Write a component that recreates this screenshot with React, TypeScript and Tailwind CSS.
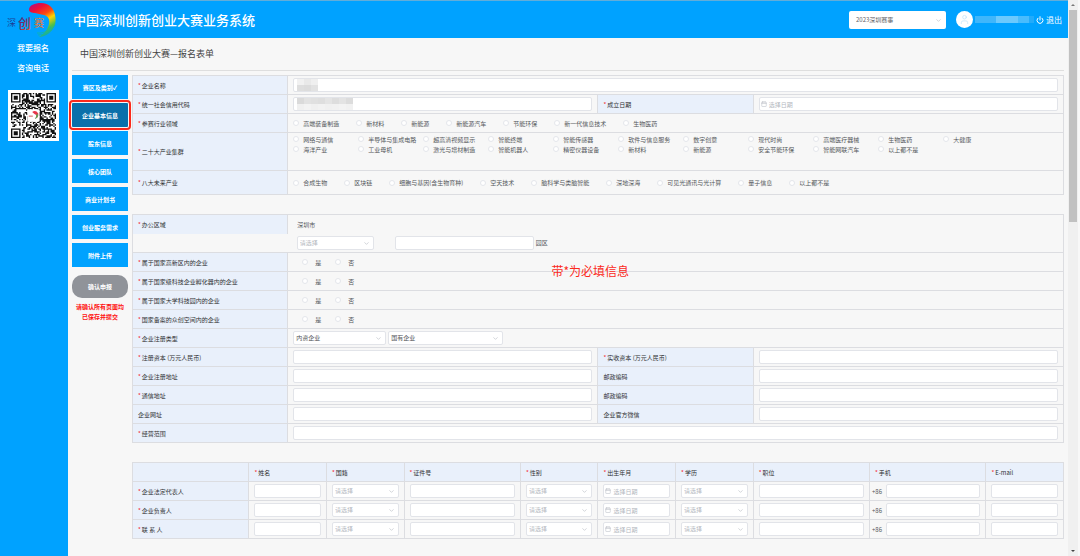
import type { ReactNode } from 'react';
import clsx from 'clsx';
import { Calendar, ChevronDown, Power, User } from 'lucide-react';

const sections = [
  '赛区及类别✓',
  '企业基本信息',
  '股东信息',
  '核心团队',
  '商业计划书',
  '创业服务需求',
  '附件上传',
];

const fields = [
  '高端装备制造',
  '新材料',
  '新能源',
  '新能源汽车',
  '节能环保',
  '新一代信息技术',
  '生物医药',
];

const clusters = [
  '网络与通信',
  '半导体与集成电路',
  '超高清视频显示',
  '智能终端',
  '智能传感器',
  '软件与信息服务',
  '数字创意',
  '现代时尚',
  '高端医疗器械',
  '生物医药',
  '大健康',
  '海洋产业',
  '工业母机',
  '激光与增材制造',
  '智能机器人',
  '精密仪器设备',
  '新材料',
  '新能源',
  '安全节能环保',
  '智能网联汽车',
  '以上都不是',
];

const futures = [
  '合成生物',
  '区块链',
  '细胞与基因(含生物育种)',
  '空天技术',
  '脑科学与类脑智能',
  '深地深海',
  '可见光通讯与光计算',
  '量子信息',
  '以上都不是',
];

const yesNoRows = [
  '属于国家高新区内的企业',
  '属于国家级科技企业孵化器内的企业',
  '属于国家大学科技园内的企业',
  '国家备案的众创空间内的企业',
];

const pairRows = [
  { id: 'capital', left: '注册资本 (万元人民币)', right: '实收资本 (万元人民币)', leftRequired: true, rightRequired: true },
  { id: 'reg-address', left: '企业注册地址', right: '邮政编码', leftRequired: true, rightRequired: false },
  { id: 'mail-address', left: '通信地址', right: '邮政编码', leftRequired: true, rightRequired: false },
  { id: 'website', left: '企业网址', right: '企业官方微信', leftRequired: false, rightRequired: false },
];

const people = ['企业法定代表人', '企业负责人', '联 系 人'];

const peopleColumns = [
  { name: '姓名', kind: 'text', width: 'w-1/12' },
  { name: '国籍', kind: 'select', width: 'w-1/12' },
  { name: '证件号', kind: 'text', width: 'w-1/8' },
  { name: '性别', kind: 'select', width: 'w-1/12' },
  { name: '出生年月', kind: 'date', width: 'w-1/12' },
  { name: '学历', kind: 'select', width: 'w-1/12' },
  { name: '职位', kind: 'text', width: 'w-1/8' },
  { name: '手机', kind: 'phone', width: 'w-1/8' },
  { name: 'E-mail', kind: 'text', width: 'w-1/12' },
];

const tableClass = 'w-full table-fixed border-collapse border border-[#dcdde1]';
const labelClass = 'border border-[#dcdde1] bg-[#e9f0fb] pl-[5px] text-left font-normal text-[#303133]';
const cellClass = 'border border-[#dcdde1] px-[5px]';
const boxClass = 'h-[14px] rounded-[2px] border border-[#e2e4e9] bg-white text-[6px] leading-none';

function Required({ children, show = true }: { children: ReactNode; show?: boolean }) {
  return (
    <>
      {show && <span className="mr-px text-[#f5222d]">*</span>}
      {children}
    </>
  );
}

function TextBox({ id, label, className = 'w-full' }: { id?: string; label?: string; className?: string }) {
  return <input id={id} aria-label={label} type="text" className={clsx(boxClass, 'block px-1', className)} />;
}

function DateBox({ id, label }: { id?: string; label?: string }) {
  return (
    <div className="relative">
      <input
        id={id}
        aria-label={label}
        type="text"
        placeholder="选择日期"
        className={clsx(boxClass, 'block w-full pl-[9px] placeholder:text-[#b4b8c0]')}
      />
      <Calendar className="pointer-events-none absolute top-1 left-[2px] size-[6px] text-[#b4b8c0]" />
    </div>
  );
}

function SelectBox({
  id,
  label,
  value = '请选择',
  className = 'w-full',
}: {
  id?: string;
  label?: string;
  value?: string;
  className?: string;
}) {
  return (
    <div className={clsx('relative', className)}>
      <select
        id={id}
        aria-label={label}
        className={clsx(
          boxClass,
          'block w-full appearance-none pl-[2px]',
          value === '请选择' ? 'text-[#b4b8c0]' : 'text-[#505256]',
        )}
      >
        <option>{value}</option>
      </select>
      <ChevronDown className="pointer-events-none absolute top-1 right-1 size-[7px] text-[#b4b8c0]" />
    </div>
  );
}

function RadioItem({ name, label, className }: { name: string; label: string; className?: string }) {
  return (
    <label className={clsx('flex items-center whitespace-nowrap text-[#55575c]', className)}>
      <input
        type="radio"
        name={name}
        className="size-[6px] shrink-0 appearance-none rounded-full border border-[#e4e6eb] bg-white checked:bg-[#00a2ff]"
      />
      {label}
    </label>
  );
}

function RadioRow({ name, items }: { name: string; items: string[] }) {
  return (
    <div role="radiogroup" aria-label={name} className="flex gap-[17px]">
      {items.map((item) => (
        <RadioItem key={item} name={name} label={item} className="gap-1" />
      ))}
    </div>
  );
}

function Masked({ children, shades }: { children: ReactNode; shades: string[] }) {
  return (
    <div className="relative">
      {children}
      <div className="absolute top-px left-1 grid h-3 auto-cols-[7px] grid-flow-col grid-rows-2">
        {shades.map((shade, i) => (
          <span key={i} className={shade} />
        ))}
      </div>
    </div>
  );
}

function Swirl() {
  return (
    <>
      <defs>
        <linearGradient id="swirl" x1="29" y1="4" x2="48" y2="36" gradientUnits="userSpaceOnUse">
          <stop offset="0" stopColor="#b0107f" />
          <stop offset="0.2" stopColor="#ee0f3a" />
          <stop offset="0.42" stopColor="#fb4a10" />
          <stop offset="0.58" stopColor="#ffd400" />
          <stop offset="0.78" stopColor="#4fc04a" />
          <stop offset="1" stopColor="#00a4c8" />
        </linearGradient>
      </defs>
      <path
        d="M29 9C29 4 35 2 41 2C49 2 54 7 55 14C57 22 54 29 48 33C45 35 42 36 39 36C45 32 48 28 49 23C50 18 48 15 44 14C40 13 38 13 35 12C32 12 29 11 29 9Z"
        fill="url(#swirl)"
      />
      <path d="M37 32Q45 33 51 26M38 34Q49 34 55 24" fill="none" stroke="#12b8a0" strokeWidth="0.8" />
    </>
  );
}

function Logo() {
  return (
    <svg viewBox="0 0 64 38" className="h-[38px] w-16 shrink-0" role="img" aria-label="深创赛">
      <defs>
        <linearGradient id="brush" x1="18" y1="14" x2="30" y2="28" gradientUnits="userSpaceOnUse">
          <stop offset="0" stopColor="#1c3f9c" />
          <stop offset="0.5" stopColor="#7a2a63" />
          <stop offset="1" stopColor="#e0452a" />
        </linearGradient>
      </defs>
      <Swirl />
      <text x="7" y="25" fontSize="9" fill="#1c3f96">深</text>
      <text x="18" y="27" fontSize="13" fontWeight="500" fill="url(#brush)">创</text>
      <text x="34" y="26" fontSize="10" fill="#f2762a">赛</text>
    </svg>
  );
}

const QR_SIZE = 33;

function finderDark(x: number, y: number) {
  const ring = Math.max(Math.abs(x - 3), Math.abs(y - 3));
  return ring === 3 || ring <= 1;
}

function qrDark(x: number, y: number) {
  const edge = QR_SIZE - 8;
  if (x < 8 && y < 8) return finderDark(x, y);
  if (x >= edge && y < 8) return finderDark(QR_SIZE - 1 - x, y);
  if (x < 8 && y >= edge) return finderDark(x, QR_SIZE - 1 - y);
  const seed = Math.sin(x * 12.9898 + y * 78.233) * 43758.5453;
  return seed - Math.floor(seed) > 0.48;
}

function QrCode() {
  const modules: string[] = [];
  for (let y = 0; y < QR_SIZE; y++) {
    for (let x = 0; x < QR_SIZE; x++) {
      if (qrDark(x, y)) modules.push(`M${x} ${y}h1v1h-1z`);
    }
  }
  return (
    <div className="mt-4 size-[51px] bg-white p-[3px]">
      <svg viewBox="0 0 33 33" className="size-full" role="img" aria-label="二维码">
        <path d={modules.join('')} fill="#111" />
        <rect x="12" y="12" width="9" height="9" rx="1" fill="#fff" />
        <path d="M15.500 14Q18 12 20 15Q20.500 18 17.500 19Q19.500 16 17.500 15.500Z" fill="#e8364a" />
        <path d="M19.500 15Q20.500 18 17.500 19Q18.800 17.500 18.700 16Z" fill="#45b95a" />
        <path d="M13 17h3" stroke="#d88" strokeWidth="1" />
      </svg>
    </div>
  );
}

function Header() {
  return (
    <header className="flex h-[38px] items-center border-t border-[#62add9] bg-[#00a2ff] pr-[6px] text-white">
      <Logo />
      <h1 className="ml-[9px] flex-1 text-[13px] font-medium">中国深圳创新创业大赛业务系统</h1>
      <div className="relative w-[97px]">
        <select
          aria-label="赛事"
          className="block h-[18px] w-full appearance-none rounded-[2px] bg-white pl-[7px] text-[6px] leading-none text-[#606266]"
        >
          <option>2023深圳赛事</option>
        </select>
        <ChevronDown className="pointer-events-none absolute top-[6px] right-1 size-[7px] text-[#b4b8c0]" />
      </div>
      <span className="ml-[10px] flex size-[17px] items-center justify-center rounded-full bg-white">
        <User className="size-[11px] text-[#bfe4fb]" strokeWidth={1.5} />
      </span>
      <span className="mx-[2px] flex h-[7px] w-[59px]">
        <span className="flex-[4] bg-[#3fb6fb]" />
        <span className="flex-[4] bg-[#6cc9fd]" />
        <span className="flex-[2] bg-[#49bcfd]" />
        <span className="flex-1 bg-[#22abfb]" />
      </span>
      <button type="button" className="flex items-center gap-[2px] text-[8px]">
        <Power className="size-[8px]" strokeWidth={3} />
        退出
      </button>
    </header>
  );
}

function SectionNav() {
  return (
    <nav className="flex w-14 shrink-0 flex-col gap-1 text-[6px] font-bold text-white">
      {sections.map((section) => (
        <button
          key={section}
          type="button"
          className={clsx(
            'h-6',
            section === '企业基本信息'
              ? 'rounded-[1px] bg-[#0b70aa] outline-2 outline-offset-1 outline-[#fb2a1c]'
              : 'bg-[#00a2ff]',
          )}
        >
          {section}
        </button>
      ))}
      <button type="button" className="mt-1 h-[23px] rounded-[10px] bg-[#909399]">
        确认申报
      </button>
      <p className="text-center leading-[10px] text-[#ff1010]">
        请确认所有页面均
        <br />
        已保存并提交
      </p>
    </nav>
  );
}

function FormColumns() {
  return (
    <colgroup>
      <col className="w-1/6" />
      <col className="w-1/3" />
      <col className="w-1/6" />
      <col className="w-1/3" />
    </colgroup>
  );
}

function IdentityTable() {
  return (
    <table className={tableClass}>
      <FormColumns />
      <tbody>
        <tr className="h-[19px]">
          <th className={labelClass}>
            <label htmlFor="company"><Required>企业名称</Required></label>
          </th>
          <td colSpan={3} className={cellClass}>
            <Masked shades={['bg-[#f1f1f1]', 'bg-[#dedede]', 'bg-[#e9e9e9]', 'bg-[#dcdcdc]', 'bg-[#efefef]', 'bg-[#e2e2e2]']}>
              <TextBox id="company" />
            </Masked>
          </td>
        </tr>
        <tr className="h-[19px]">
          <th className={labelClass}>
            <label htmlFor="credit-code"><Required>统一社会信用代码</Required></label>
          </th>
          <td className={cellClass}>
            <Masked
              shades={[
                'bg-[#dadada]', 'bg-[#f0f0f0]', 'bg-[#e2e2e2]', 'bg-[#f3f3f3]', 'bg-[#e0e0e0]', 'bg-[#f0f0f0]', 'bg-[#dedede]', 'bg-[#f2f2f2]',
                'bg-[#e4e4e4]', 'bg-[#f0f0f0]', 'bg-[#dddddd]', 'bg-[#f1f1f1]', 'bg-[#e3e3e3]', 'bg-[#f3f3f3]', 'bg-[#dcdcdc]', 'bg-[#f1f1f1]',
              ]}
            >
              <TextBox id="credit-code" />
            </Masked>
          </td>
          <th className={labelClass}>
            <label htmlFor="founded"><Required>成立日期</Required></label>
          </th>
          <td className={cellClass}>
            <DateBox id="founded" />
          </td>
        </tr>
        <tr className="h-[19px]">
          <th className={labelClass}><Required>参赛行业领域</Required></th>
          <td colSpan={3} className={cellClass}>
            <RadioRow name="参赛行业领域" items={fields} />
          </td>
        </tr>
        <tr className="h-[38px]">
          <th className={labelClass}><Required>二十大产业集群</Required></th>
          <td colSpan={3} className={clsx(cellClass, 'pt-px align-top')}>
            <div role="radiogroup" aria-label="二十大产业集群" className="flex flex-wrap">
              {clusters.map((cluster) => (
                <RadioItem key={cluster} name="cluster" label={cluster} className="h-[10px] w-[65px] gap-1" />
              ))}
            </div>
          </td>
        </tr>
        <tr className="h-6">
          <th className={labelClass}><Required>八大未来产业</Required></th>
          <td colSpan={3} className={cellClass}>
            <RadioRow name="八大未来产业" items={futures} />
          </td>
        </tr>
      </tbody>
    </table>
  );
}

function CompanyTable() {
  return (
    <div className="relative">
      <table className={tableClass}>
        <FormColumns />
        <tbody>
          <tr className="h-[19px]">
            <th className={clsx(labelClass, 'border-b-0')}><Required>办公区域</Required></th>
            <td colSpan={3} className="pl-[9px] text-[#55575c]">深圳市</td>
          </tr>
          <tr className="h-[19px]">
            <td />
            <td colSpan={3} className="pl-[9px]">
              <div className="flex items-center">
                <SelectBox label="办公区域" className="w-[77px]" />
                <TextBox id="park" className="mr-[2px] ml-[21px] w-[139px]" />
                <label htmlFor="park" className="text-[#55575c]">园区</label>
              </div>
            </td>
          </tr>
          {yesNoRows.map((row) => (
            <tr key={row} className="h-[19px]">
              <th className={labelClass}><Required>{row}</Required></th>
              <td colSpan={3} className={cellClass}>
                <div role="radiogroup" aria-label={row} className="flex gap-[14px] pl-[9px]">
                  <RadioItem name={row} label="是" className="gap-[7px]" />
                  <RadioItem name={row} label="否" className="gap-[7px]" />
                </div>
              </td>
            </tr>
          ))}
          <tr className="h-[19px]">
            <th className={labelClass}>
              <label htmlFor="company-type"><Required>企业注册类型</Required></label>
            </th>
            <td colSpan={3} className={cellClass}>
              <div className="flex gap-[2px]">
                <SelectBox id="company-type" value="内资企业" className="w-[93px]" />
                <SelectBox label="企业注册类型明细" value="国有企业" className="w-[115px]" />
              </div>
            </td>
          </tr>
          {pairRows.map((row) => (
            <tr key={row.id} className="h-[19px]">
              <th className={labelClass}>
                <label htmlFor={row.id}><Required show={row.leftRequired}>{row.left}</Required></label>
              </th>
              <td className={cellClass}><TextBox id={row.id} /></td>
              <th className={labelClass}>
                <label htmlFor={`${row.id}-2`}><Required show={row.rightRequired}>{row.right}</Required></label>
              </th>
              <td className={cellClass}><TextBox id={`${row.id}-2`} /></td>
            </tr>
          ))}
          <tr className="h-[19px]">
            <th className={labelClass}>
              <label htmlFor="scope"><Required>经营范围</Required></label>
            </th>
            <td colSpan={3} className={cellClass}><TextBox id="scope" /></td>
          </tr>
        </tbody>
      </table>
      <p className="absolute top-12 left-[45%] text-[12px] text-[#fb2a1c]">带*为必填信息</p>
    </div>
  );
}

function PersonField({ kind, label }: { kind: string; label: string }) {
  if (kind === 'select') return <SelectBox label={label} />;
  if (kind === 'date') return <DateBox label={label} />;
  if (kind === 'phone') {
    return (
      <div className="flex items-center gap-1">
        <span className="text-[#55575c]">+86</span>
        <TextBox label={label} className="min-w-0 flex-1" />
      </div>
    );
  }
  return <TextBox label={label} />;
}

function PeopleTable() {
  return (
    <table className={tableClass}>
      <colgroup>
        <col className="w-1/8" />
        {peopleColumns.map((column) => (
          <col key={column.name} className={column.width} />
        ))}
      </colgroup>
      <thead>
        <tr className="h-[19px]">
          <th className={labelClass} />
          {peopleColumns.map((column) => (
            <th key={column.name} scope="col" className={labelClass}><Required>{column.name}</Required></th>
          ))}
        </tr>
      </thead>
      <tbody>
        {people.map((person) => (
          <tr key={person} className="h-[19px]">
            <th scope="row" className={labelClass}><Required>{person}</Required></th>
            {peopleColumns.map((column) => (
              <td
                key={column.name}
                className={clsx('border border-[#dcdde1] pr-[5px]', column.kind === 'phone' ? 'pl-[2px]' : 'pl-[5px]')}
              >
                <PersonField kind={column.kind} label={`${person} ${column.name}`} />
              </td>
            ))}
          </tr>
        ))}
      </tbody>
    </table>
  );
}

function ScrollRail() {
  return (
    <div aria-hidden="true" className="flex w-3 shrink-0 flex-col items-center border-r-2 border-[#f8f8f8] bg-[#f0f0f0]">
      <span className="flex h-[10px] items-center">
        <svg viewBox="0 0 4 2" className="h-[2px] w-1"><path d="M0 2L2 0L4 2Z" fill="#777" /></svg>
      </span>
      <span className="h-[212px] w-2 bg-[#c1c1c1]" />
      <span className="mt-auto flex h-[10px] items-center">
        <svg viewBox="0 0 4 2" className="h-[2px] w-1"><path d="M0 0L2 2L4 0Z" fill="#444" /></svg>
      </span>
    </div>
  );
}

export default function App() {
  return (
    <div className="flex min-h-screen bg-[#f7f7f7] font-['Noto_Sans_CJK_SC',sans-serif] text-[6px]">
      <div className="flex min-w-0 flex-1 flex-col">
        <Header />
        <div className="flex flex-1">
          <aside className="flex w-[68px] shrink-0 flex-col items-center bg-[#00a2ff] pr-[2px] text-[8px] font-medium text-white">
            <a href="#signup" className="mt-1 leading-3">我要报名</a>
            <a href="#contact" className="mt-2 leading-3">咨询电话</a>
            <QrCode />
          </aside>
          <main className="min-w-0 flex-1 pr-1 pl-1">
            <h2 className="flex h-[33px] items-center border-b border-[#dedede] pl-2 text-[9px] text-[#444]">
              中国深圳创新创业大赛—报名表单
            </h2>
            <div className="flex gap-1 pt-1">
              <SectionNav />
              <form className="flex min-w-0 flex-1 flex-col gap-[19px]">
                <IdentityTable />
                <CompanyTable />
                <PeopleTable />
              </form>
            </div>
          </main>
        </div>
      </div>
      <ScrollRail />
    </div>
  );
}
